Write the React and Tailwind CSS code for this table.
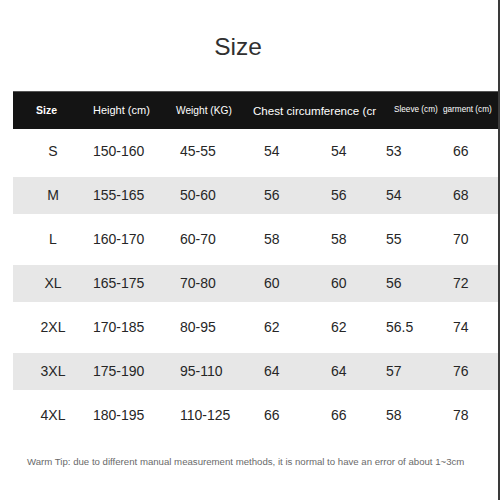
const rows = [
  ["S", "150-160", "45-55", "54", "54", "53", "66"],
  ["M", "155-165", "50-60", "56", "56", "54", "68"],
  ["L", "160-170", "60-70", "58", "58", "55", "70"],
  ["XL", "165-175", "70-80", "60", "60", "56", "72"],
  ["2XL", "170-185", "80-95", "62", "62", "56.5", "74"],
  ["3XL", "175-190", "95-110", "64", "64", "57", "76"],
  ["4XL", "180-195", "110-125", "66", "66", "58", "78"],
];

export default function App() {
  return (
    <div className="w-[500px] h-[500px] overflow-hidden bg-white border-r-2 border-[#3a3a3a] font-['Liberation_Sans',Arial,sans-serif]">
      <div className="pt-[34px] pr-[22px] text-center text-[24.5px] leading-[25px] text-[#303030]">
        Size
      </div>

      <div className="ml-[13px] mt-[32px]">
        {/* header bar */}
        <div className="h-[38px] bg-[#141414] border-t border-[#555] text-white grid grid-cols-[80px_83px_77px_124px_17px_49px_1fr] items-center whitespace-nowrap">
          <div className="pl-[23px] text-[10.5px] font-bold">Size</div>
          <div className="text-[11px]">Height (cm)</div>
          <div className="text-[10.2px]">Weight (KG)</div>
          <div className="text-[11.6px]">Chest circumference (cr</div>
          <div></div>
          <div className="text-[8.2px]">Sleeve (cm)</div>
          <div className="text-[8.2px]">garment (cm)</div>
        </div>

        {rows.map((r, i) => (
          <div key={r[0]} className="h-[44px] flex items-center">
            <div
              className={`h-[37px] w-full grid grid-cols-[80px_87px_84px_67px_55px_67px_1fr] items-center text-[14px] text-[#262626] ${
                i % 2 === 1 ? "bg-[#e7e7e7]" : ""
              }`}
            >
              <div className="text-center">{r[0]}</div>
              <div>{r[1]}</div>
              <div>{r[2]}</div>
              <div>{r[3]}</div>
              <div>{r[4]}</div>
              <div>{r[5]}</div>
              <div>{r[6]}</div>
            </div>
          </div>
        ))}

        <p className="mt-[19px] pl-[14px] text-[9.65px] leading-[12px] text-[#6a6a6a] whitespace-nowrap">
          Warm Tip: due to different manual measurement methods, it is normal to have an error of about 1~3cm
        </p>
      </div>
    </div>
  );
}
